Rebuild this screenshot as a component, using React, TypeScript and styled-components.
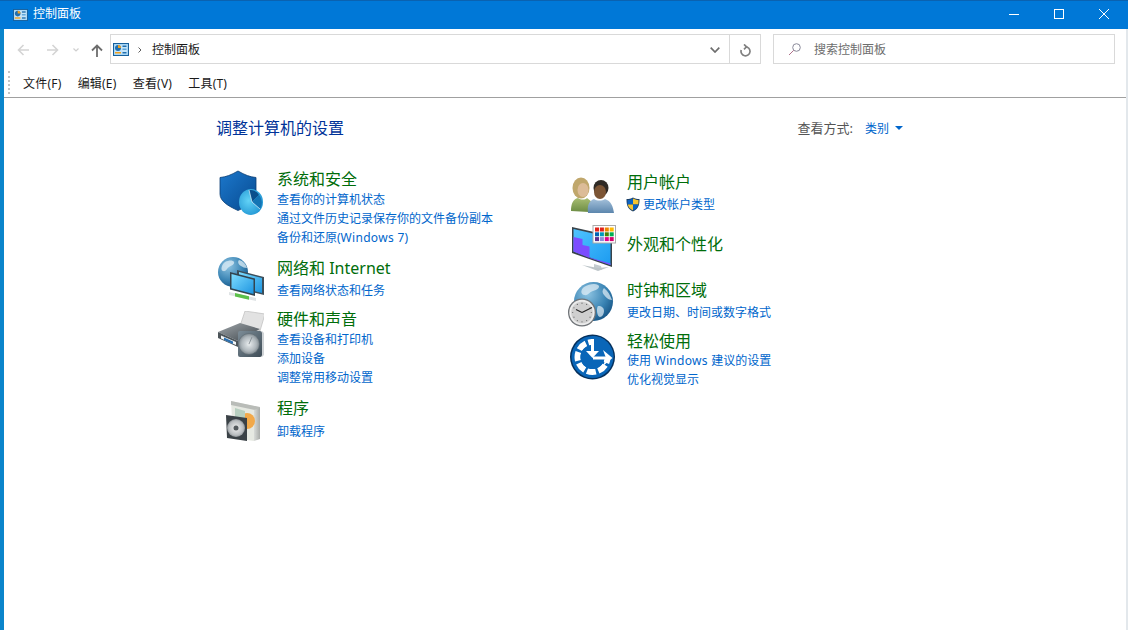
import React from "react";
import styled, { createGlobalStyle } from "styled-components";

const Global = createGlobalStyle`
  html, body { margin: 0; padding: 0; height: 100%; background: #fff; overflow: hidden; }
  #root { height: 100%; }
  * { box-sizing: border-box; }
  body { font-family: "Noto Sans", "Noto Sans CJK SC", sans-serif; }
`;

const Win = styled.div`
  width: 1128px; height: 630px; display: flex; flex-direction: column;
  border-left: 4px solid #0a85cb; border-right: 2px solid #e3e8ec; background: #fff;
`;
const TitleBar = styled.header`
  height: 29px; margin-left: -4px; margin-right: -2px; flex: none; background: #0078d7; border-top: 1px solid #0a62b0;
  display: flex; align-items: center; color: #fff; padding-left: 13px;
`;
const TitleText = styled.span`
  font-size: 12px; margin-left: 5px; line-height: 16px; padding-bottom: 2px;
`;
const WinButtons = styled.div`
  margin-left: auto; margin-right: 2px; display: flex; height: 100%;
`;
const WinBtn = styled.div`
  width: 45px; display: flex; align-items: center; justify-content: center; padding-bottom: 2px;
`;
const NavRow = styled.div`
  height: 40px; flex: none; display: flex; align-items: center; padding: 0 13px 0 0;
`;
const NavBtn = styled.div<{ $w: number }>`
  width: ${p => p.$w}px; height: 30px; padding-top: 2px; display: flex; align-items: center; justify-content: center; flex: none;
`;
const Address = styled.div`
  width: 651px; height: 30px; border: 1px solid #d9d9d9; display: flex; align-items: center; flex: none; padding-left: 2px;
`;
const Crumb = styled.span`
  font-size: 12px; color: #1a1a1a; margin-left: 10px; line-height: 16px; padding-top: 2px;
`;
const AddrEnd = styled.div`
  margin-left: auto; display: flex; height: 100%; align-items: center;
`;
const Chevron = styled.div`
  width: 32px; padding-left: 4px; padding-top: 2px; display: flex; align-items: center; justify-content: center;
`;
const Refresh = styled.div`
  width: 31px; height: 100%; padding-left: 1px; padding-top: 2px; border-left: 1px solid #d9d9d9; display: flex; align-items: center; justify-content: center;
`;
const Search = styled.div`
  width: 342px; height: 30px; margin-left: 12px; border: 1px solid #d9d9d9; display: flex; align-items: center; padding-left: 14px; flex: none;
  font-size: 12px; color: #6d6d6d;
`;
const SearchText = styled.span`
  margin-left: 13px;
`;
const MenuBar = styled.nav`
  height: 29px; flex: none; border-bottom: 1px solid #a0a0a0; display: flex; align-items: center; padding-left: 4px; padding-top: 2px;
`;
const Grip = styled.div`
  width: 2px; height: 23px; margin-top: -4px; border-left: 2px dotted #c4c4c4; margin-right: 13px;
`;
const MenuItem = styled.span`
  font-size: 12px; color: #1a1a1a; margin-right: 16.2px; letter-spacing: .2px; line-height: 18px;
`;
const Content = styled.main`
  flex: 1; padding: 19px 0 0 212px; display: flex; flex-direction: column;
`;
const HeadRow = styled.div`
  width: 687px; display: flex; align-items: center; height: 22px;
`;
const Heading = styled.h1`
  margin: 0; font-size: 16px; font-weight: 400; color: #003399; line-height: 22px;
`;
const ViewBy = styled.div`
  margin-left: auto; display: flex; align-items: center; font-size: 13px; color: #555;
`;
const ViewLabel = styled.span`
  margin-bottom: 2px;
`;
const ViewVal = styled.span`
  color: #0066cc; font-size: 12px; margin-left: 12px; margin-right: 6px;
`;
const Columns = styled.div`
  display: flex; width: 700px; margin-top: 31px; margin-left: 2px;
`;
const Col = styled.div<{ $w: number; $top: number }>`
  width: ${p => p.$w}px; padding-top: ${p => p.$top}px; flex: none;
`;
const Category = styled.section<{ $h: number }>`
  display: flex; height: ${p => p.$h}px;
`;
const IconBox = styled.div<{ $w?: number }>`
  width: ${p => p.$w ?? 59}px; flex: none; height: 46px;
`;
const Body = styled.div<{ $top?: number }>`
  margin-top: ${p => p.$top ?? 0}px;
`;
const CatTitle = styled.div<{ $gap?: number }>`
  font-size: 16px; color: #006d0a; line-height: 20px; height: 20px; margin-top: -1px; margin-bottom: ${p => p.$gap ?? 1}px;
`;
const CatLink = styled.div`
  font-size: 12px; color: #0066cc; line-height: 19px; white-space: nowrap; display: flex; align-items: center;
`;
const Latin = styled.span`
  letter-spacing: .3px; white-space: pre;
`;

const ArrowL = ({ c }: { c: string }) => (
  <svg width="12" height="12" viewBox="0 0 12 12" fill="none" stroke={c} strokeWidth="1.6"><path d="M12 6H1.500M6.500 1l-5 5 5 5" /></svg>
);
const ArrowR = ({ c }: { c: string }) => (
  <svg width="12" height="12" viewBox="0 0 12 12" fill="none" stroke={c} strokeWidth="1.6"><path d="M0 6h10.500M5.500 1l5 5-5 5" /></svg>
);
const SmallDown = () => (
  <svg width="6" height="4" viewBox="0 0 6 4" fill="none" stroke="#cfcfcf" strokeWidth="1.200"><path d="M.5.5 3 3 5.500.5" /></svg>
);
const ArrowUp = () => (
  <svg width="12" height="13" viewBox="0 0 12 13" fill="none" stroke="#6d6d6d" strokeWidth="1.800"><path d="M6 13V1.500M1 6.500l5-5 5 5" /></svg>
);
const CpIcon = ({ w, h }: { w: number; h: number }) => (
  <svg width={w} height={h} viewBox="0 0 16 13" preserveAspectRatio="none" style={{ flex: "none" }}>
    <rect x=".5" y=".5" width="15" height="12" fill="#8ccbf2" stroke="#17609c" />
    <rect x="1.500" y="1.500" width="13" height="10" fill="#c4e4f9" />
    <circle cx="5" cy="5" r="3" fill="#1f6fb0" />
    <path d="M5 5V2a3 3 0 0 1 3 3z" fill="#f0a020" />
    <rect x="9.500" y="2.500" width="4" height="1.500" fill="#1f6fb0" />
    <rect x="9.500" y="5.500" width="4" height="1.500" fill="#5aa4d8" />
    <rect x="2" y="9" width="6" height="1.500" fill="#f0a020" />
    <rect x="9.500" y="9" width="4" height="1.500" fill="#1f6fb0" />
  </svg>
);

const Shield = () => (
  <svg width="46" height="46" viewBox="0 0 46 46">
    <defs>
      <linearGradient id="sh" x1="0" y1="0" x2="1" y2="1"><stop offset="0" stopColor="#1c78cc" /><stop offset="1" stopColor="#074a90" /></linearGradient>
      <radialGradient id="pie" cx=".4" cy=".45" r=".7"><stop offset="0" stopColor="#62d2f6" /><stop offset="1" stopColor="#1b90d0" /></radialGradient>
    </defs>
    <path d="M2 7.500C8 7 13 5 20 1c7 4 12 6 18 6.500V24c0 7-8 12-18 16.500C10 36 2 31 2 24z" fill="url(#sh)" stroke="#0a3d73" strokeWidth=".8" />
    <ellipse cx="33" cy="32" rx="12" ry="13" fill="url(#pie)" />
    <path d="M34 32l-3-12c4 0 8 1 10 5z" fill="#0a4f8c" />
    <path d="M34 32l7-7c3 4 4 9 1 14z" fill="#1474b4" />
    <path d="M34 32l8 7M34 32l-3-12" stroke="#e6f6fd" strokeWidth=".7" />
  </svg>
);

const GlobeDefs = ({ id }: { id: string }) => (
  <defs>
    <radialGradient id={id} cx=".35" cy=".3" r=".8"><stop offset="0" stopColor="#8ec4e2" /><stop offset=".6" stopColor="#3a84b4" /><stop offset="1" stopColor="#124f80" /></radialGradient>
  </defs>
);

const Network = () => (
  <svg width="46" height="46" viewBox="0 0 46 46">
    <GlobeDefs id="g1" />
    <defs>
      <linearGradient id="scr" x1="0" y1="0" x2="1" y2="1"><stop offset="0" stopColor="#7ddcff" /><stop offset="1" stopColor="#1d94e0" /></linearGradient>
    </defs>
    <circle cx="15" cy="16" r="15" fill="url(#g1)" />
    <path d="M7 6c4-2 8-2 9 0s-3 4-5 5-3 5-6 4-1-7 2-9zM21 4c4 1 7 4 8 8-3 0-4-1-6-2s-4-4-2-6z" fill="#dfeef6" opacity=".75" />
    <path d="M19 14l27 7v18l-27-7z" fill="#3c4e5a" />
    <path d="M21 16l23 6v15l-23-6z" fill="url(#scr)" />
    <path d="M12 16l25 6.500V40l-25-6.500z" fill="#33444f" />
    <path d="M13.500 18l22 5.700V38l-22-5.700z" fill="url(#scr)" />
    <path d="M11 36l27 6v3l-27-6z" fill="#dfe3e5" />
    <path d="M17 37l14 3.200v3.500l-14-3.200z" fill="#5cc04a" />
  </svg>
);

const Printer = () => (
  <svg width="46" height="46" viewBox="0 0 46 46">
    <defs>
      <linearGradient id="pr" x1="0" y1="0" x2="1" y2="1"><stop offset="0" stopColor="#a0a6aa" /><stop offset="1" stopColor="#3e464c" /></linearGradient>
      <linearGradient id="sp" x1="0" y1="0" x2="1" y2="1"><stop offset="0" stopColor="#7c8c97" /><stop offset="1" stopColor="#3f4d57" /></linearGradient>
      <radialGradient id="cone" cx=".5" cy=".5" r=".5"><stop offset="0" stopColor="#e8ecee" /><stop offset=".7" stopColor="#aeb6bb" /><stop offset="1" stopColor="#808a90" /></radialGradient>
    </defs>
    <path d="M27 0l20 3-5 17-20-5z" fill="#e2e2e2" stroke="#b5b5b5" strokeWidth=".6" />
    <path d="M0 21 22 12l20 6-22 12z" fill="url(#pr)" />
    <path d="M0 21l20 9v6L0 27z" fill="#4c5459" />
    <path d="M3 24.500l15 6.500v3L3 27.500z" fill="#f2f6f8" />
    <path d="M6 26.500l9 4v2.500l-9-4z" fill="#2a6fb0" />
    <rect x="20" y="20" width="24" height="26" rx="2" fill="url(#sp)" />
    <path d="M44 20l2 2v22l-2 2z" fill="#cfd3d6" />
    <circle cx="31" cy="33" r="10.500" fill="url(#cone)" stroke="#59656d" strokeWidth=".5" />
    <circle cx="31" cy="33" r="2" fill="#dfe3e5" />
    <path d="M31 33l3-7" stroke="#7d878d" strokeWidth=".8" />
  </svg>
);

const Programs = () => (
  <svg width="46" height="46" viewBox="0 0 46 46">
    <defs>
      <linearGradient id="box" x1="0" y1="0" x2="1" y2="0"><stop offset="0" stopColor="#d8dbd8" /><stop offset="1" stopColor="#a9aca9" /></linearGradient>
      <radialGradient id="cd" cx=".5" cy=".5" r=".5"><stop offset="0" stopColor="#f2f2f2" /><stop offset=".8" stopColor="#b8bcbf" /><stop offset="1" stopColor="#8d9296" /></radialGradient>
    </defs>
    <path d="M13 5l27 6-4 34-21-3z" fill="#e6e9e2" />
    <path d="M13 5l29 6v4L13 9z" fill="#b9bcb8" />
    <path d="M36 14l6-2v31l-6 2z" fill="url(#box)" />
    <circle cx="29" cy="25" r="8" fill="#f2a94a" />
    <path d="M17 12l10 3v14l-10 2z" fill="#b7cfc0" />
    <path d="M8 19l21 3v23L9 42z" fill="#3a4146" />
    <circle cx="18" cy="32" r="9" fill="url(#cd)" />
    <circle cx="18" cy="32" r="2.500" fill="#53595d" />
  </svg>
);

const Users = () => (
  <svg width="46" height="46" viewBox="0 0 46 46">
    <defs>
      <linearGradient id="gr" x1="0" y1="0" x2="0" y2="1"><stop offset="0" stopColor="#a8bd72" /><stop offset="1" stopColor="#6c8c44" /></linearGradient>
      <linearGradient id="bl" x1="0" y1="0" x2="0" y2="1"><stop offset="0" stopColor="#a3c0da" /><stop offset="1" stopColor="#5c86ad" /></linearGradient>
    </defs>
    <ellipse cx="11" cy="15" rx="8.500" ry="10.500" fill="#c0a76c" />
    <ellipse cx="13" cy="17" rx="5.500" ry="7" fill="#dcbc98" />
    <path d="M1 38c0-7 2-12 7-13 3 2 7 2 9 0l5 4-3 10z" fill="url(#gr)" />
    <ellipse cx="31" cy="15" rx="7.500" ry="8" fill="#2f2a25" />
    <ellipse cx="30" cy="19" rx="6" ry="7" fill="#7c5535" />
    <path d="M18 40c-1-8 1-12 6-14 3 2 8 2 11 0 6 2 8 7 9 14z" fill="url(#bl)" />
  </svg>
);

const Monitor = () => {
  const cells = ["#e2231a", "#e2231a", "#f08300", "#ffb900", "#0063b1", "#0099bc", "#498205", "#00b050", "#5c2e91", "#8e8cd8", "#e3008c", "#d6006d"];
  return (
    <svg width="46" height="46" viewBox="0 0 46 46">
      <defs>
        <linearGradient id="mscr" x1="0" y1="0" x2="1" y2="1"><stop offset="0" stopColor="#4fc3ff" /><stop offset="1" stopColor="#1c9bf0" /></linearGradient>
      </defs>
      <path d="M2 2l40 9v31L2 28z" fill="#39434a" />
      <path d="M3.500 4l37 8.500v27.500L3.500 26.500z" fill="url(#mscr)" />
      <path d="M3.500 12l9 2v6l7 1.500v11.500l-16-6.500z" fill="#7c4dff" />
      <path d="M19.500 33l21 7v-1.500l-21-6z" fill="#7c4dff" />
      <path d="M24 39l7 2 1 4-8-1z" fill="#c4ccd0" />
      <path d="M12 40l16 3 11-1-11 4z" fill="#bcc4c8" />
      <rect x="23" y="0.500" width="22.500" height="17.500" fill="#fff" stroke="#a9a9a9" />
      {cells.map((c, i) => (
        <rect key={i} x={25 + (i % 4) * 4.900} y={2.500 + Math.floor(i / 4) * 4.800} width="4" height="4" fill={c} />
      ))}
    </svg>
  );
};

const ClockGlobe = () => (
  <svg width="46" height="46" viewBox="0 0 46 46" style={{ overflow: "visible" }}>
    <GlobeDefs id="g2" />
    <circle cx="23.500" cy="19.500" r="19.500" fill="url(#g2)" />
    <path d="M14 5c5-3 11-4 14-2s-1 5-5 6-5 5-9 4-3-6 0-8zM34 6c4 3 6 7 8 12-4 0-6-3-8-5s-2-5 0-7zM28 24c4 0 6 2 6 5s-2 6-4 6-3-4-3-6 0-4 1-5z" fill="#e4f0f6" opacity=".7" />
    <circle cx="12" cy="30.500" r="14" fill="#6f7377" />
    <circle cx="12" cy="30.500" r="12.700" fill="#ececec" />
    <circle cx="12" cy="30.500" r="10.800" fill="#cfcfcf" />
    {Array.from({ length: 12 }).map((_, i) => {
      const a = (i * Math.PI) / 6;
      return <circle key={i} cx={12 + 9.300 * Math.cos(a)} cy={30.500 + 9.300 * Math.sin(a)} r=".6" fill="#666" />;
    })}
    <path d="M12 30.500l-6-3M12 30.500l10-5" stroke="#222" strokeWidth="1.200" fill="none" />
  </svg>
);

const Ease = () => (
  <svg width="46" height="46" viewBox="0 0 46 46">
    <circle cx="22.500" cy="23" r="22.500" fill="#06305c" />
    <circle cx="22.500" cy="23" r="21" fill="#0a66b8" />
    <circle cx="22.500" cy="23" r="15" fill="none" stroke="#fff" strokeWidth="6" strokeDasharray="9 2.500" strokeDashoffset="3" />
    <circle cx="22.500" cy="23" r="12" fill="#0a66b8" />
    <path d="M22.500 23V2A21 21 0 0 1 43.500 23z" fill="#0a66b8" />
    <path d="M22.500 5v16" stroke="#fff" strokeWidth="3" />
    <path d="M16 17l6.500 7 6.500-7z" fill="#fff" />
    <path d="M23 24h13" stroke="#fff" strokeWidth="3" />
    <path d="M33 16l9.500 8-9.500 8 3-8z" fill="#fff" />
  </svg>
);

const UacShield = () => (
  <svg width="14" height="15" viewBox="0 0 14 15" style={{ marginRight: 3, marginLeft: -1 }}>
    <path d="M7 .5C9 1.500 11 2 13.500 2c0 6-1 10-6.500 12.500C1.500 12 .5 8 .5 2 3 2 5 1.500 7 .5z" fill="#1c3f66" />
    <path d="M7 1.500v6H1.500C1.500 5.500 1.500 4 1.500 3 3.500 3 5.500 2.400 7 1.500z" fill="#0b63c4" />
    <path d="M7 1.500c1.500.9 3.500 1.500 5.500 1.500 0 1.500 0 3-.2 4.500H7z" fill="#f7c52e" />
    <path d="M7 7.500h5.300C11.700 10 10 12 7 13.500z" fill="#0b63c4" />
    <path d="M1.700 7.500H7v6C4 12 2.300 10 1.700 7.500z" fill="#f7c52e" />
  </svg>
);

export default function App() {
  return (
    <>
      <Global />
      <Win>
        <TitleBar>
          <CpIcon w={15} h={12} />
          <TitleText>控制面板</TitleText>
          <WinButtons>
            <WinBtn>
              <svg width="10" height="10" viewBox="0 0 10 10" stroke="#fff"><path d="M0 5.500h10" /></svg>
            </WinBtn>
            <WinBtn>
              <svg width="10" height="10" viewBox="0 0 10 10" fill="none" stroke="#fff"><rect x=".5" y=".5" width="9" height="9" /></svg>
            </WinBtn>
            <WinBtn>
              <svg width="10" height="10" viewBox="0 0 10 10" stroke="#fff"><path d="M0 0l10 10M10 0 0 10" /></svg>
            </WinBtn>
          </WinButtons>
        </TitleBar>
        <NavRow>
          <NavBtn $w={4} />
          <NavBtn $w={30}><ArrowL c="#d4d4d4" /></NavBtn>
          <NavBtn $w={30}><ArrowR c="#d4d4d4" /></NavBtn>
          <NavBtn $w={16}><SmallDown /></NavBtn>
          <NavBtn $w={26}><ArrowUp /></NavBtn>
          <Address>
            <CpIcon w={16} h={13} />
            <svg width="4" height="6" viewBox="0 0 4 6" fill="none" stroke="#5f5f5f" style={{ marginLeft: 9, marginTop: 2 }}><path d="M.5.5l2.500 2.500L.5 5.500" /></svg>
            <Crumb>控制面板</Crumb>
            <AddrEnd>
              <Chevron>
                <svg width="10" height="6" viewBox="0 0 10 6" fill="none" stroke="#6d6d6d" strokeWidth="1.700"><path d="M.7.7 5 5l4.300-4.300" /></svg>
              </Chevron>
              <Refresh>
                <svg width="11" height="13" viewBox="0 0 11 13" fill="none" stroke="#808080" strokeWidth="1.700">
                  <path d="M5.500 2.800a4.500 4.500 0 1 1-4.300 3.200" />
                  <path d="M4 .4 6.500 2.800 4 5.300" />
                </svg>
              </Refresh>
            </AddrEnd>
          </Address>
          <Search>
            <svg width="13" height="13" viewBox="0 0 13 13" fill="none">
              <circle cx="8.500" cy="4.500" r="3.800" stroke="#8a8a9a" />
              <path d="M5.700 7.300 1 12" stroke="#b0708a" />
            </svg>
            <SearchText>搜索控制面板</SearchText>
          </Search>
        </NavRow>
        <MenuBar>
          <Grip />
          <MenuItem>文件(F)</MenuItem>
          <MenuItem>编辑(E)</MenuItem>
          <MenuItem>查看(V)</MenuItem>
          <MenuItem>工具(T)</MenuItem>
        </MenuBar>
        <Content>
          <HeadRow>
            <Heading>调整计算机的设置</Heading>
            <ViewBy>
              <ViewLabel>查看方式:</ViewLabel>
              <ViewVal>类别</ViewVal>
              <svg width="8" height="4" viewBox="0 0 8 4"><path d="M0 0h8L4 4z" fill="#0066cc" /></svg>
            </ViewBy>
          </HeadRow>
          <Columns>
            <Col $w={352} $top={0}>
              <Category $h={86}>
                <IconBox><Shield /></IconBox>
                <Body>
                  <CatTitle>系统和安全</CatTitle>
                  <CatLink>查看你的计算机状态</CatLink>
                  <CatLink>通过文件历史记录保存你的文件备份副本</CatLink>
                  <CatLink>备份和还原(<Latin>Windows 7</Latin>)</CatLink>
                </Body>
              </Category>
              <Category $h={55}>
                <IconBox><Network /></IconBox>
                <Body $top={3}>
                  <CatTitle $gap={3}>网络和 Internet</CatTitle>
                  <CatLink>查看网络状态和任务</CatLink>
                </Body>
              </Category>
              <Category $h={85}>
                <IconBox><Printer /></IconBox>
                <Body $top={-1}>
                  <CatTitle>硬件和声音</CatTitle>
                  <CatLink>查看设备和打印机</CatLink>
                  <CatLink>添加设备</CatLink>
                  <CatLink>调整常用移动设置</CatLink>
                </Body>
              </Category>
              <Category $h={50}>
                <IconBox><Programs /></IconBox>
                <Body $top={3}>
                  <CatTitle $gap={4}>程序</CatTitle>
                  <CatLink>卸载程序</CatLink>
                </Body>
              </Category>
            </Col>
            <Col $w={340} $top={3}>
              <Category $h={52}>
                <IconBox $w={57}><Users /></IconBox>
                <Body>
                  <CatTitle $gap={3}>用户帐户</CatTitle>
                  <CatLink><UacShield />更改帐户类型</CatLink>
                </Body>
              </Category>
              <Category $h={57}>
                <IconBox $w={57}><Monitor /></IconBox>
                <Body $top={10}>
                  <CatTitle>外观和个性化</CatTitle>
                </Body>
              </Category>
              <Category $h={52}>
                <IconBox $w={57}><ClockGlobe /></IconBox>
                <Body $top={-1}>
                  <CatTitle $gap={3}>时钟和区域</CatTitle>
                  <CatLink>更改日期、时间或数字格式</CatLink>
                </Body>
              </Category>
              <Category $h={60}>
                <IconBox $w={57}><Ease /></IconBox>
                <Body $top={-2}>
                  <CatTitle $gap={0}>轻松使用</CatTitle>
                  <CatLink>使用<Latin> Windows </Latin>建议的设置</CatLink>
                  <CatLink>优化视觉显示</CatLink>
                </Body>
              </Category>
            </Col>
          </Columns>
        </Content>
      </Win>
    </>
  );
}
